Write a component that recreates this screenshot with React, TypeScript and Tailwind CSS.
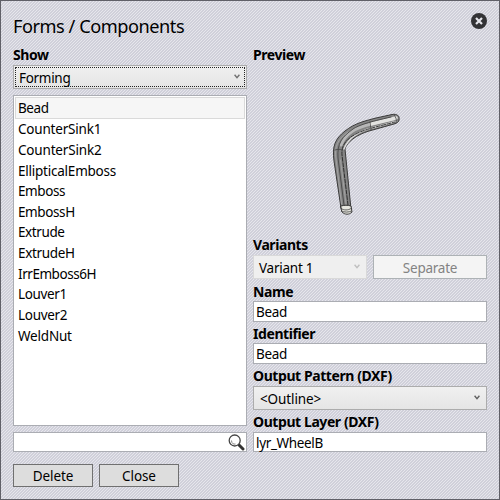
import React from "react";

const forms = [
  { name: "Bead", spacing: "tracking-[-0.4px]" },
  { name: "CounterSink1", spacing: "tracking-[-0.2px]" },
  { name: "CounterSink2", spacing: "tracking-[-0.18px]" },
  { name: "EllipticalEmboss", spacing: "tracking-[-0.23px]" },
  { name: "Emboss", spacing: "tracking-[-0.4px]" },
  { name: "EmbossH", spacing: "tracking-[-0.4px]" },
  { name: "Extrude", spacing: "tracking-[-0.4px]" },
  { name: "ExtrudeH", spacing: "tracking-[-0.35px]" },
  { name: "IrrEmboss6H", spacing: "tracking-[-0.45px]" },
  { name: "Louver1", spacing: "tracking-[-0.35px]" },
  { name: "Louver2", spacing: "tracking-[-0.3px]" },
  { name: "WeldNut", spacing: "tracking-[-0.2px]" },
];

function Label({ children, className = "" }: { children: React.ReactNode; className?: string }) {
  return (
    <div className={`h-[18px] whitespace-nowrap text-[14px] font-bold leading-[18px] tracking-[-0.42px] ${className}`}>
      {children}
    </div>
  );
}

function Chevron({ color }: { color: string }) {
  return (
    <svg className="mb-[2px]" width="6" height="5" viewBox="0 0 6 5" fill="none" stroke={color} strokeWidth="1.4">
      <path d="M.6 .8 3 3.6 5.4 .8" />
    </svg>
  );
}

function Field({ value, className = "" }: { value: string; className?: string }) {
  return (
    <div className={`flex items-center border border-[#abadb3] bg-white pl-[2px] tracking-[-0.35px] ${className}`}>
      {value}
    </div>
  );
}

function BeadPreview() {
  return (
    <svg width="90" height="120" viewBox="0 0 90 120" fill="none" strokeLinecap="round" strokeLinejoin="round">
      <path
        d="M21 108 14 61C12 46 15 39 25 31 35 23 45 21 56 18L72 14.5C77 13.5 80 16 79 20 79 22 77 23 74 24L49 31C36 35 27 42 25 49L31 109Z"
        fill="#858585"
        stroke="#3a3a3a"
      />
      <path d="M21 45C25 34 37 27 51 24L76 18" stroke="#b8b8b8" strokeWidth="3" />
      <path d="m51 24 25-6" stroke="#e2e2e0" strokeWidth="3.4" />
      <path d="M24 49C29 36 40 31 52 28L76 21.5" stroke="#dedede" strokeWidth="1.4" />
      <path d="M24 105 18 58C17 43 22 37 33 29 39 25 49 22 71 17" stroke="#454545" strokeWidth=".9" />
      <path d="M28 105 22 55C21 43 29 37 40 32 50 28 60 26 75 22" stroke="#252525" strokeWidth=".9" strokeDasharray="4 1.5" />
      <path d="M21.500 104 16 59C14 46 18 39 28 32" stroke="#aaa" strokeWidth=".8" />
      <path d="M26 104 20.500 60" stroke="#a8a8a8" strokeWidth=".8" />
      <path d="m50 22 1 8M22 50c-2-1-4-1-7 0M74 15c2 2 3 5 2 8" stroke="#424242" strokeWidth=".8" />
      <path d="M21 106c3-1 7-1 10 0l1 6c-3 3-7 3-10 0Z" fill="#e6e6df" stroke="#292929" strokeWidth=".9" />
      <path d="M21 108.500c3 2 7 2 10 0M21.500 111c3 1.500 7 1.500 10 0" stroke="#404040" strokeWidth=".8" />
    </svg>
  );
}

export default function App() {
  return (
    <main className="flex h-[500px] w-[500px] flex-col border border-[#606068] bg-[linear-gradient(135deg,#d0d0da_42%,#e6e6ec_42%,#e6e6ec_58%,#d0d0da_58%)] bg-size-[3px_3px] px-3 font-['Noto_Sans','Open_Sans',sans-serif] text-[13.5px] leading-[18px] tracking-[-0.1px] text-black">
      <header className="flex h-[45px] shrink-0 items-start justify-between">
        <h1 className="pt-[12px] text-[18.2px] leading-[26px] tracking-[-0.47px]">Forms / Components</h1>
        <svg className="mt-[12px]" width="16" height="16" viewBox="0 0 16 16">
          <circle cx="8" cy="8" r="8" fill="#333336" />
          <path d="m5 5 6 6m0-6-6 6" stroke="#e5e5eb" strokeWidth="2.2" />
        </svg>
      </header>
      <div className="flex gap-[6px]">
        <section className="w-[234px]">
          <Label>Show</Label>
          <div className="mt-[1px] h-6 border border-[#acacac] bg-linear-to-b from-[#f0f0f0] to-[#e5e5e5] p-[1px]">
            <div className="flex h-full items-center justify-between border border-dotted border-[#222] pr-1 pl-[3px]">
              <span className="pt-[2px] tracking-[-0.3px]">Forming</span>
              <Chevron color="#707070" />
            </div>
          </div>
          <div className="mt-[6px] h-[331px] border border-[#abadb3] bg-white p-[1px]">
            {forms.map((form, index) => (
              <div
                key={form.name}
                className={`flex items-center border pl-[2px] ${form.spacing} ${index === 0 ? "h-[22px] border-[#dadada] bg-[#f6f6f6]" : "h-[20.64px] border-transparent"}`}
              >
                {form.name}
              </div>
            ))}
          </div>
          <div className="mt-[6px] flex h-5 items-center justify-end border border-[#abadb3] bg-white pr-[1px]">
            <svg width="17" height="17" viewBox="0 0 17 17" fill="none">
              <path d="m11 11 4 4" stroke="#333" strokeWidth="3" strokeLinecap="round" />
              <circle cx="6.7" cy="6.5" r="5.5" fill="white" stroke="#454545" strokeWidth="1.3" />
              <path d="M3.5 6.5c0 3 2 4 4 3.5" stroke="#888" />
            </svg>
          </div>
        </section>
        <section className="w-[234px]">
          <Label>Preview</Label>
          <div className="flex h-[172px] items-start pt-[36px] pl-[67px]">
            <BeadPreview />
          </div>
          <Label>Variants</Label>
          <div className="mt-[1px] flex gap-[6px]">
            <div className="flex h-6 w-[114px] items-center justify-between border border-[#d9d9d9] bg-[#efefef] pr-[6px] pl-[5px]">
              <span className="pt-[2px] tracking-[-0.25px]">Variant 1</span>
              <Chevron color="#bfbfbf" />
            </div>
            <button className="h-6 w-[114px] border border-[#adb2b5] bg-[#f4f4f4] pt-[2px] tracking-[-0.25px] text-[#838383]">
              Separate
            </button>
          </div>
          <Label className="mt-[4px]">Name</Label>
          <Field value="Bead" className="h-[21px]" />
          <Label className="mt-[3px]">Identifier</Label>
          <Field value="Bead" className="h-[21px]" />
          <Label className="mt-[3px]">Output Pattern (DXF)</Label>
          <div className="mt-[1px] flex h-6 items-center justify-between border border-[#acacac] bg-linear-to-b from-[#f0f0f0] to-[#e5e5e5] pr-[6px] pl-[6px]">
            <span className="pt-[2px]">&lt;Outline&gt;</span>
            <Chevron color="#606060" />
          </div>
          <Label className="mt-[3px]">Output Layer (DXF)</Label>
          <Field value="lyr_WheelB" className="mt-[1px] h-5 pt-[2px]" />
        </section>
      </div>
      <footer className="mt-[12px] flex gap-[6px]">
        <button className="h-[23px] w-20 border border-[#707070] bg-[#dddddd]">Delete</button>
        <button className="h-[23px] w-20 border border-[#707070] bg-[#dddddd]">Close</button>
      </footer>
    </main>
  );
}
